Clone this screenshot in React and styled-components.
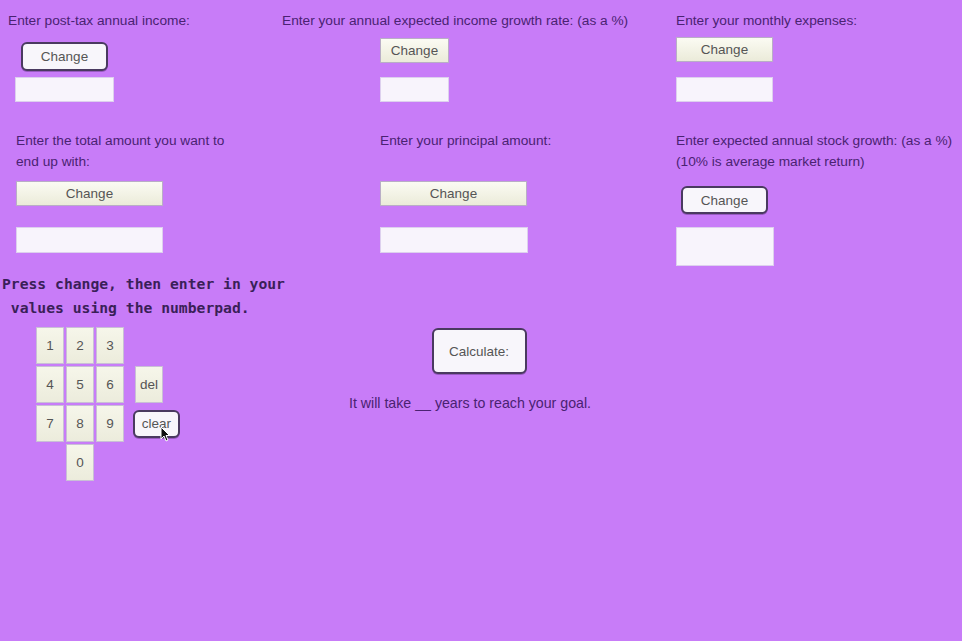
import React from "react";
import styled, { createGlobalStyle, css } from "styled-components";

const Global = createGlobalStyle`
  html, body { margin: 0; padding: 0; }
  body {
    background: #c87cf8;
    font-family: "Liberation Sans", Arial, sans-serif;
    width: 962px;
    height: 641px;
    overflow: hidden;
  }
`;

const Page = styled.div`
  display: flex;
  flex-direction: column;
  padding-top: 10px;
`;

const FieldRow = styled.div`
  display: grid;
  grid-template-columns: 282px 394px 1fr;
  margin-top: ${(p) => p.$top || 0}px;
`;

const Field = styled.div`
  display: flex;
  flex-direction: column;
  align-items: flex-start;
  padding-left: ${(p) => p.$pad || 0}px;
`;

const Label = styled.div`
  font-size: 13.7px;
  line-height: 21px;
  color: #4a2272;
  white-space: nowrap;
  min-height: ${(p) => p.$minH || 21}px;
  margin-left: ${(p) => p.$indent || 0}px;
`;

const buttonText = css`
  font-family: "Liberation Sans", Arial, sans-serif;
  font-size: 13.5px;
  color: #555;
  padding: 0;
  cursor: default;
`;

const RoundButton = styled.button`
  ${buttonText}
  width: ${(p) => p.$w}px;
  height: ${(p) => p.$h}px;
  margin-left: ${(p) => p.$indent || 0}px;
  margin-top: ${(p) => p.$mt || 0}px;
  background: #f8f6fb;
  border: 2px solid #4a3a60;
  border-radius: 6px;
  box-shadow: 0 1px 0 rgba(60, 30, 90, 0.35);
  position: relative;
`;

const FlatButton = styled.button`
  ${buttonText}
  width: ${(p) => p.$w}px;
  height: ${(p) => p.$h || 25}px;
  margin-left: ${(p) => p.$indent || 0}px;
  margin-top: ${(p) => p.$mt || 0}px;
  background: linear-gradient(#fbfbf3, #ebebd9);
  border: 1px solid #b9aec6;
  border-radius: 0;
`;

const Input = styled.div`
  box-sizing: border-box;
  width: ${(p) => p.$w}px;
  height: ${(p) => p.$h || 25}px;
  margin-left: ${(p) => p.$indent || 0}px;
  margin-top: ${(p) => p.$mt || 0}px;
  background: #f8f4fc;
  border: 1px solid #ddd0ee;
`;

const Bottom = styled.div`
  display: grid;
  grid-template-columns: 282px 394px 1fr;
  margin-top: 6px;
`;

const LeftPane = styled.div`
  display: flex;
  flex-direction: column;
  align-items: flex-start;
`;

const Instructions = styled.div`
  font-family: "DejaVu Sans Mono", "Liberation Mono", monospace;
  font-weight: bold;
  font-size: 14.7px;
  line-height: 24px;
  color: #3a1f58;
  white-space: pre;
  margin-left: 2px;
`;

const Pad = styled.div`
  display: grid;
  grid-template-columns: repeat(3, 28px) auto;
  grid-template-rows: repeat(4, 37px);
  gap: 2px;
  margin-left: 36px;
  margin-top: 7px;
`;

const Key = styled.button`
  ${buttonText}
  width: 28px;
  height: 37px;
  background: linear-gradient(#f6f6ea, #ececdc);
  border: 1px solid #c9bfd6;
  border-radius: 0;
  grid-column: ${(p) => p.$col};
  grid-row: ${(p) => p.$row};
  margin-left: ${(p) => p.$ml || 0}px;
`;

const ClearWrap = styled.div`
  grid-column: 4;
  grid-row: 3;
  align-self: center;
  margin-left: 7px;
  position: relative;
`;

const Cursor = styled.svg`
  position: absolute;
  left: 27px;
  top: 16px;
  width: 10px;
  height: 16px;
`;

const CenterPane = styled.div`
  display: flex;
  flex-direction: column;
  align-items: center;
  padding-top: 56px;
`;

const Result = styled.div`
  font-size: 14.2px;
  line-height: 20px;
  color: #4a2272;
  margin-top: 19px;
  margin-right: 18px;
`;

export default function App() {
  const keys = [1, 2, 3, 4, 5, 6, 7, 8, 9];
  return (
    <>
      <Global />
      <Page>
        <FieldRow>
          <Field $pad={8}>
            <Label>Enter post-tax annual income:</Label>
            <RoundButton $w={87} $h={29} $indent={13} $mt={11}>Change</RoundButton>
            <Input $w={99} $indent={7} $mt={6} />
          </Field>
          <Field>
            <Label>Enter your annual expected income growth rate: (as a %)</Label>
            <FlatButton $w={69} $indent={98} $mt={7}>Change</FlatButton>
            <Input $w={69} $indent={98} $mt={14} />
          </Field>
          <Field>
            <Label>Enter your monthly expenses:</Label>
            <FlatButton $w={97} $mt={6}>Change</FlatButton>
            <Input $w={97} $mt={15} />
          </Field>
        </FieldRow>
        <FieldRow $top={28}>
          <Field $pad={16}>
            <Label $minH={42}>
              Enter the total amount you want to
              <br />
              end up with:
            </Label>
            <FlatButton $w={147} $mt={9}>Change</FlatButton>
            <Input $w={147} $h={26} $mt={21} />
          </Field>
          <Field $pad={98}>
            <Label $minH={42}>Enter your principal amount:</Label>
            <FlatButton $w={147} $mt={9}>Change</FlatButton>
            <Input $w={148} $h={26} $mt={21} />
          </Field>
          <Field>
            <Label $minH={42}>
              Enter expected annual stock growth: (as a %)
              <br />
              (10% is average market return)
            </Label>
            <RoundButton $w={87} $h={28} $indent={5} $mt={14}>Change</RoundButton>
            <Input $w={98} $h={39} $mt={13} />
          </Field>
        </FieldRow>
        <Bottom>
          <LeftPane>
            <Instructions>{"Press change, then enter in your\n values using the numberpad."}</Instructions>
            <Pad>
              {keys.map((k, i) => (
                <Key key={k} $col={(i % 3) + 1} $row={Math.floor(i / 3) + 1}>
                  {k}
                </Key>
              ))}
              <Key $col={4} $row={2} $ml={9}>del</Key>
              <ClearWrap>
                <RoundButton $w={47} $h={28}>clear</RoundButton>
                <Cursor viewBox="0 0 10 16">
                  <path d="M1 1 L1 13 L4 10 L6 15 L8 14 L6 9.5 L9.5 9.5 Z" fill="#111" stroke="#fff" strokeWidth="1" strokeLinejoin="round" />
                </Cursor>
              </ClearWrap>
              <Key $col={2} $row={4}>0</Key>
            </Pad>
          </LeftPane>
          <CenterPane>
            <RoundButton $w={95} $h={46}>Calculate:</RoundButton>
            <Result>It will take __ years to reach your goal.</Result>
          </CenterPane>
        </Bottom>
      </Page>
    </>
  );
}
